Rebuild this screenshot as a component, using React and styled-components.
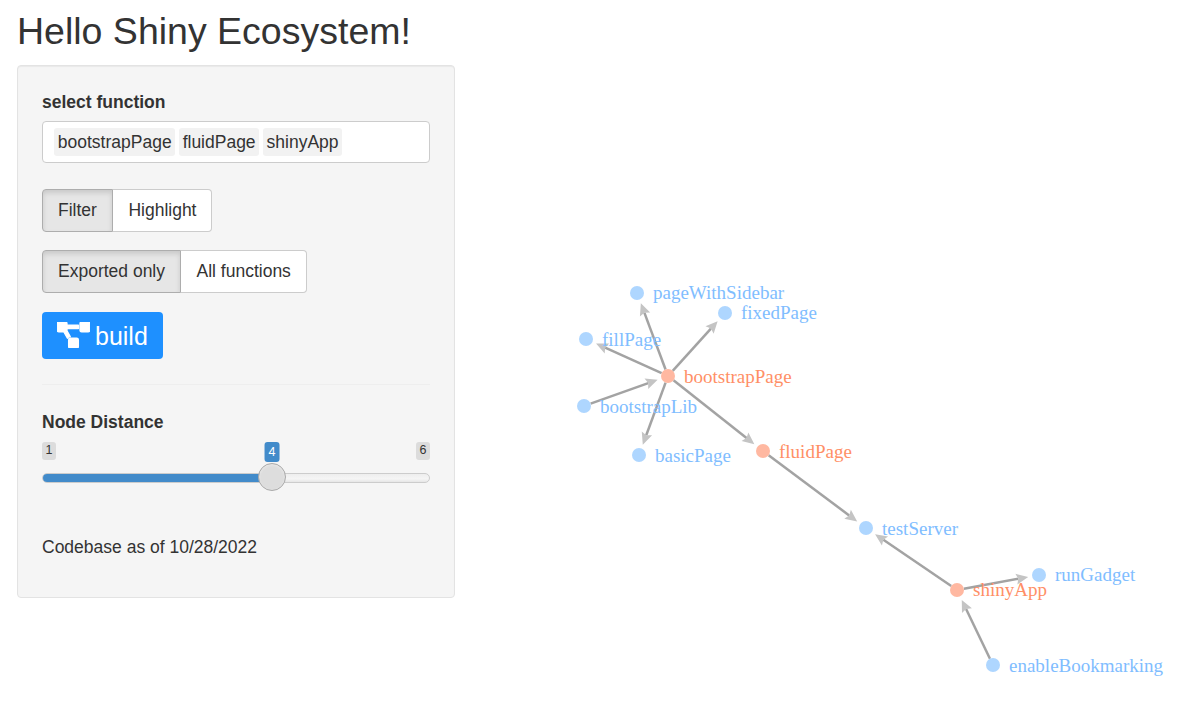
import React from "react";
import styled, { createGlobalStyle } from "styled-components";
import { FaProjectDiagram } from "react-icons/fa";

const Global = createGlobalStyle`
  html, body { margin: 0; padding: 0; background: #fff; }
  body {
    font-family: "Liberation Sans", Arial, sans-serif;
    font-size: 17.5px;
    line-height: 25px;
    color: #333;
  }
  * { box-sizing: border-box; }
`;

const Page = styled.div`
  padding-left: 17px;
`;
const Title = styled.h1`
  margin: 11px 0 14px;
  font-size: 37.5px;
  font-weight: 500;
  line-height: 40px;
  color: #333;
`;
const Row = styled.div`
  display: flex;
  align-items: flex-start;
`;
const Panel = styled.aside`
  flex: 0 0 438px;
  height: 533px;
  padding: 25px 24px 24px;
  background: #f5f5f5;
  border: 1px solid #e3e3e3;
  border-radius: 4px;
  box-shadow: inset 0 1px 1px rgba(0, 0, 0, 0.05);
`;
const Label = styled.label`
  display: block;
  height: 25px;
  line-height: 23px;
  margin-bottom: 5px;
  font-weight: 700;
`;
const TagInput = styled.div`
  display: flex;
  align-items: center;
  gap: 3.4px;
  height: 42px;
  padding: 0 11px;
  background: #fff;
  border: 1px solid #ccc;
  border-radius: 4px;
  margin-bottom: 26px;
`;
const Tag = styled.span`
  padding: 0 3.8px;
  height: 28px;
  line-height: 28px;
  background: #f2f2f2;
  border-radius: 3px;
  color: #333;
`;
const Group = styled.div`
  display: flex;
  width: fit-content;
  margin-bottom: ${(p) => p.$mb}px;
`;
const Segment = styled.button`
  height: 43px;
  padding: 0 15px;
  font: inherit;
  color: #333;
  background: ${(p) => (p.$active ? "#e6e6e6" : "#fff")};
  border: 1px solid ${(p) => (p.$active ? "#adadad" : "#ccc")};
  box-shadow: ${(p) => (p.$active ? "inset 0 3px 5px rgba(0,0,0,.125)" : "none")};
  &:first-child {
    border-radius: 4px 0 0 4px;
  }
  &:last-child {
    padding: 0 14.8px 0 15.5px;
    border-left: 0;
    border-radius: 0 4px 4px 0;
  }
`;
const BuildButton = styled.button`
  display: flex;
  align-items: center;
  gap: 5px;
  width: 121px;
  height: 47px;
  padding: 2px 15px 0;
  font: inherit;
  font-size: 25px;
  color: #fff;
  background: #1e90ff;
  border: 0;
  border-radius: 4px;
  svg {
    width: 33px;
    height: 26px;
    margin-top: -4px;
    stroke: currentColor;
    stroke-width: 26;
    stroke-linejoin: round;
  }
`;
const Rule = styled.hr`
  height: 1px;
  margin: 25px 0 26px;
  border: 0;
  background: #eee;
`;
const Slider = styled.div`
  position: relative;
  height: 49px;
  margin-top: 6px;
  margin-bottom: 44px;
`;
const Ends = styled.div`
  display: flex;
  justify-content: space-between;
`;
const Bubble = styled.span`
  display: block;
  height: 18px;
  padding: 0 3.5px;
  font-size: 12.5px;
  line-height: 17px;
  color: #333;
  background: rgba(0, 0, 0, 0.1);
  border-radius: 3px;
`;
const ValueBubble = styled(Bubble)`
  position: absolute;
  top: 0;
  transform: translateX(-50%);
  height: 20px;
  padding: 0 4px;
  line-height: 20px;
  color: #fff;
  background: #428bca;
`;
const Track = styled.div`
  position: absolute;
  left: 0;
  right: 0;
  top: 31px;
  height: 10px;
  overflow: hidden;
  background: linear-gradient(#eee, #f5f5f5 60%, #e6e6e6);
  border: 1px solid #ccc;
  border-radius: 5px;
`;
const Fill = styled.div`
  margin: -1px;
  height: 10px;
  background: #428bca;
`;
const Handle = styled.div`
  position: absolute;
  top: 21px;
  width: 28px;
  height: 28px;
  transform: translateX(-50%);
  background: #ddd;
  border: 1px solid #aaa;
  border-radius: 50%;
  box-shadow: inset 0 1px 3px rgba(255, 255, 255, 0.4);
`;
const Note = styled.p`
  margin: 0;
`;
const Graph = styled.svg`
  flex: 0 0 734px;
  width: 734px;
  height: 640px;
  display: block;
  margin-top: 1px;
  font-family: "Liberation Serif", "Times New Roman", serif;
  font-size: 19px;
`;

const BLUE = { dot: "#aed6ff", text: "#80bdff" };
const ORANGE = { dot: "#ffb8a1", text: "#ff8f66" };

// name: [x, y, palette, label baseline offset]
const nodes = {
  pageWithSidebar: [637, 293, BLUE, 6],
  fixedPage: [725, 313, BLUE, 6],
  fillPage: [586, 339, BLUE, 7],
  bootstrapPage: [668, 376, ORANGE, 7],
  bootstrapLib: [584, 406, BLUE, 7],
  basicPage: [639, 455, BLUE, 7],
  fluidPage: [763, 451, ORANGE, 7],
  testServer: [866, 528, BLUE, 7],
  shinyApp: [957, 590, ORANGE, 6],
  runGadget: [1039, 575, BLUE, 6],
  enableBookmarking: [993, 665, BLUE, 7],
};

const edges = [
  ["bootstrapPage", "pageWithSidebar"],
  ["bootstrapPage", "fixedPage"],
  ["bootstrapPage", "fillPage"],
  ["bootstrapPage", "basicPage"],
  ["bootstrapPage", "fluidPage"],
  ["bootstrapLib", "bootstrapPage"],
  ["fluidPage", "testServer"],
  ["shinyApp", "testServer"],
  ["shinyApp", "runGadget"],
  ["enableBookmarking", "shinyApp"],
];

function Edge({ from, to }) {
  const [x1, y1] = nodes[from];
  const [x2, y2] = nodes[to];
  const d = Math.hypot(x2 - x1, y2 - y1);
  const ux = (x2 - x1) / d;
  const uy = (y2 - y1) / d;
  const tipX = x2 - ux * 11;
  const tipY = y2 - uy * 11;
  const baseX = tipX - ux * 12;
  const baseY = tipY - uy * 12;
  const px = -uy * 5.5;
  const py = ux * 5.5;
  return (
    <g>
      <line
        x1={x1 + ux * 7}
        y1={y1 + uy * 7}
        x2={baseX + ux * 2}
        y2={baseY + uy * 2}
        stroke="#a3a3a3"
        strokeWidth="2.5"
      />
      <polygon
        points={`${tipX},${tipY} ${baseX + px},${baseY + py} ${baseX + ux * 2},${baseY + uy * 2} ${baseX - px},${baseY - py}`}
        fill="#c4c4c4"
      />
    </g>
  );
}

export default function App() {
  const min = 1;
  const max = 6;
  const value = 4;
  const ratio = (value - min) / (max - min);
  const handleLeft = `calc(14px + (100% - 28px) * ${ratio})`;
  return (
    <Page>
      <Global />
      <Title>Hello Shiny Ecosystem!</Title>
      <Row>
        <Panel>
          <Label>select function</Label>
          <TagInput>
            <Tag>bootstrapPage</Tag>
            <Tag>fluidPage</Tag>
            <Tag>shinyApp</Tag>
          </TagInput>
          <Group $mb={18}>
            <Segment $active>Filter</Segment>
            <Segment>Highlight</Segment>
          </Group>
          <Group $mb={19}>
            <Segment $active>Exported only</Segment>
            <Segment>All functions</Segment>
          </Group>
          <BuildButton>
            <FaProjectDiagram />
            build
          </BuildButton>
          <Rule />
          <Label>Node Distance</Label>
          <Slider>
            <Ends>
              <Bubble>{min}</Bubble>
              <Bubble>{max}</Bubble>
            </Ends>
            <ValueBubble style={{ left: handleLeft }}>{value}</ValueBubble>
            <Track>
              <Fill style={{ width: handleLeft }} />
            </Track>
            <Handle style={{ left: handleLeft }} />
          </Slider>
          <Note>Codebase as of 10/28/2022</Note>
        </Panel>
        <Graph viewBox="455 66 734 640">
          {edges.map(([a, b]) => (
            <Edge key={a + b} from={a} to={b} />
          ))}
          {Object.entries(nodes).map(([name, [x, y, c, dy]]) => (
            <g key={name}>
              <circle cx={x} cy={y} r="7" fill={c.dot} />
              <text x={x + 16} y={y + dy} fill={c.text}>
                {name}
              </text>
            </g>
          ))}
        </Graph>
      </Row>
    </Page>
  );
}
